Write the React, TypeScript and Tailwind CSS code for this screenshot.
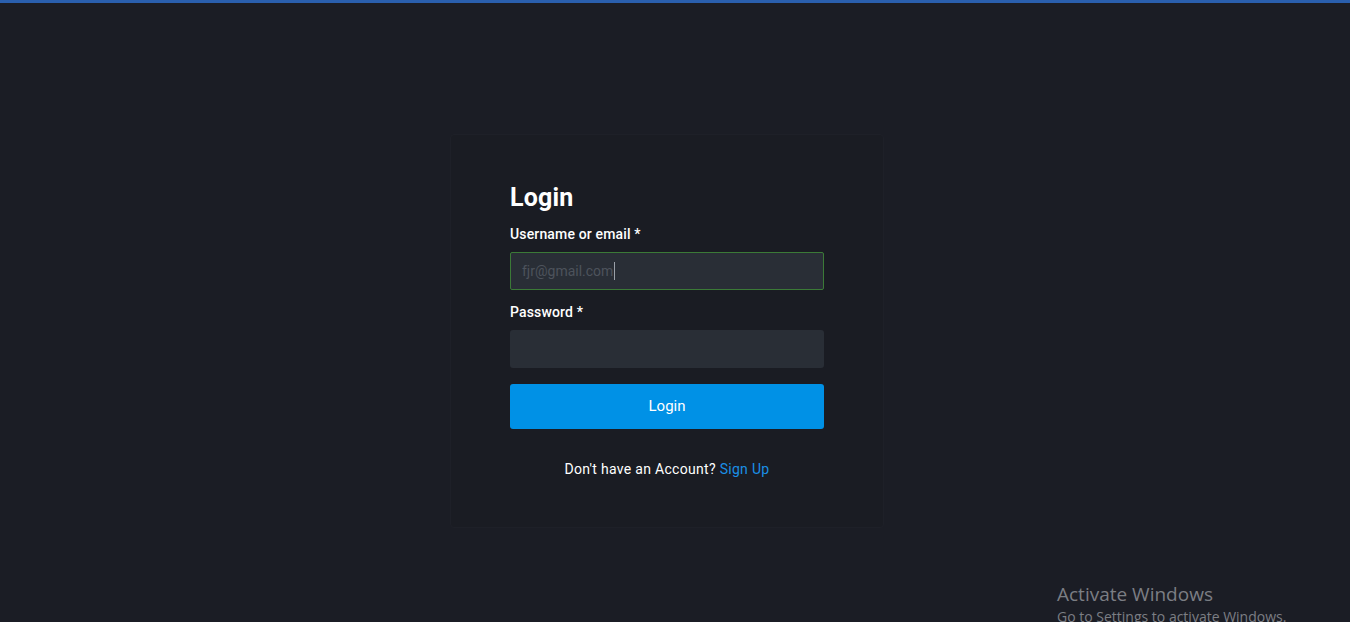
export default function App() {
  return (
    <div className="relative h-[622px] w-full overflow-hidden bg-[#1b1d25] font-['Roboto',sans-serif]">
      <div className="h-[3px] w-full bg-[#2a5fae]" />

      <div className="flex justify-center pr-[16px] pt-[131px]">
        <div className="w-[434px] rounded-[4px] border border-[#1e2028] bg-[#1a1c23] px-[59px] pb-[48px] pt-[47px]">
          <h1 className="text-[25px] font-bold leading-[32px] tracking-[0.2px] text-white">Login</h1>

          <label className="mt-[10px] block text-[14px] font-medium leading-[20px] tracking-[0.15px] text-white">
            Username or email *
          </label>
          <div className="mt-[8px] flex h-[38px] items-center rounded-[2px] border border-[#3b7a37] bg-[#292e36] px-[11px]">
            <span className="text-[14px] text-[#4d535c]">fjr@gmail.com</span>
            <span className="ml-[1px] h-[18px] w-px bg-[#9aa0a8]" />
          </div>

          <label className="mt-[12px] block text-[14px] font-medium leading-[20px] tracking-[0.15px] text-white">
            Password *
          </label>
          <div className="mt-[8px] h-[38px] rounded-[3px] bg-[#292e36]" />

          <button className="mt-[16px] h-[45px] w-full rounded-[3px] bg-[#0091e6] text-[15px] text-white">
            Login
          </button>

          <p className="mt-[30px] text-center text-[14px] leading-[20px] tracking-[0.3px] text-white">
            Don't have an Account? <a className="text-[#1a8fe6]">Sign Up</a>
          </p>
        </div>
      </div>

      <div className="absolute left-[1057px] top-[581px] font-['Open_Sans',sans-serif] text-[#7b7e84]">
        <div className="text-[19px] leading-[26px]">Activate Windows</div>
        <div className="text-[14px] leading-[20px]">Go to Settings to activate Windows.</div>
      </div>
    </div>
  );
}
